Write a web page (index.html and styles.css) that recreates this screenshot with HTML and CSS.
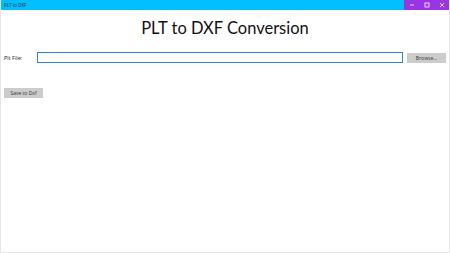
FILE: index.html
```html
<!DOCTYPE html>
<html>
<head>
<meta charset="utf-8">
<link rel="stylesheet" href="styles.css">
</head>
<body>
<div class="window">
  <div class="titlebar">
    <span class="title">PLT to DXF</span>
    <div class="controls">
      <span class="ctl"><svg width="6" height="6" viewBox="0 0 6 6"><path d="M1 3h4" stroke="#fff" stroke-width="0.8"/></svg></span>
      <span class="ctl"><svg width="6" height="6" viewBox="0 0 6 6"><rect x="1" y="1" width="4" height="4" fill="none" stroke="#fff" stroke-width="0.8"/></svg></span>
      <span class="ctl"><svg width="6" height="6" viewBox="0 0 6 6"><path d="M1 1l4 4M5 1l-4 4" stroke="#fff" stroke-width="0.8"/></svg></span>
    </div>
  </div>
  <div class="content">
    <h1 class="heading">PLT to DXF Conversion</h1>
    <div class="row">
      <label class="lbl">Plt File:</label>
      <div class="input"></div>
      <button class="btn browse">Browse...</button>
    </div>
    <button class="btn save">Save to Dxf</button>
  </div>
</div>
</body>
</html>
```
FILE: styles.css
```css
html, body {
  margin: 0;
  padding: 0;
  background: #fff;
}
.window {
  width: 450px;
  height: 253px;
  box-sizing: border-box;
  border-left: 1px solid #e6e6e6;
  border-right: 1px solid #e6e6e6;
  border-bottom: 1px solid #e6e6e6;
  display: flex;
  flex-direction: column;
  font-family: "Open Sans", "Noto Sans", sans-serif;
  overflow: hidden;
}
.titlebar {
  height: 10px;
  background: #00bfff;
  display: flex;
  align-items: center;
  margin: 0 -1px;
}
.title {
  font-size: 4.5px;
  color: #1a1a1a;
  padding-left: 4px;
  flex: 1;
  line-height: 10px;
}
.controls {
  width: 46px;
  height: 10px;
  background: #9a35e6;
  display: flex;
}
.ctl {
  flex: 1;
  display: flex;
  align-items: center;
  justify-content: center;
}
.content {
  flex: 1;
  display: flex;
  flex-direction: column;
}
.heading {
  margin: 8px 0 0;
  height: 21px;
  font-family: Lato, "Open Sans", sans-serif;
  font-weight: 400;
  font-size: 16.5px;
  line-height: 21px;
  text-align: center;
  color: #111;
}
.row {
  display: flex;
  align-items: center;
  margin-top: 13px;
  height: 11px;
  padding-left: 3px;
}
.lbl {
  font-size: 5.5px;
  color: #222;
  width: 33px;
}
.input {
  width: 366px;
  height: 11px;
  box-sizing: border-box;
  border: 1px solid #2f83d6;
  background: #fff;
}
.btn {
  font-family: "Open Sans", "Noto Sans", sans-serif;
  font-size: 5px;
  color: #333;
  background: #cccccc;
  border: none;
  padding: 0;
  height: 10px;
  width: 39px;
}
.browse {
  margin-left: 4px;
}
.save {
  margin: 25px 0 0 3px;
}
```
